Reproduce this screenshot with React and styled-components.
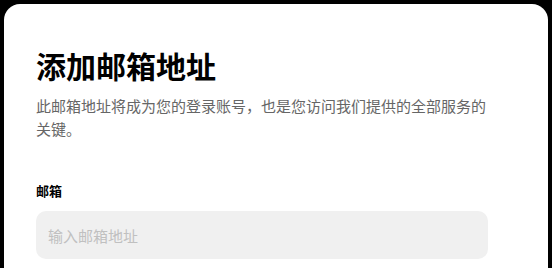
import styled, { createGlobalStyle } from "styled-components";

const GlobalStyle = createGlobalStyle`
  html, body {
    margin: 0;
    padding: 0;
    background: #000;
    height: 100%;
    overflow: hidden;
  }
  body {
    font-family: "Noto Sans CJK SC", "Noto Sans", sans-serif;
  }
`;

const Page = styled.div`
  padding: 4px 4px 0 4px;
  height: 264px;
  overflow: hidden;
`;

const Card = styled.div`
  background: #fff;
  border-radius: 16px;
  height: 300px;
  padding: 41px 60px 0 32px;
`;

const Title = styled.h1`
  margin: 0;
  font-size: 30px;
  line-height: 40px;
  font-weight: 700;
  color: #000;
`;

const Subtitle = styled.p`
  margin: 9px 0 0;
  font-size: 15px;
  line-height: 23px;
  color: #666;
`;

const Field = styled.div`
  margin-top: 42px;
  display: flex;
  flex-direction: column;
  gap: 11px;
`;

const Label = styled.label`
  font-size: 13px;
  line-height: 18px;
  font-weight: 700;
  color: #000;
`;

const Input = styled.input`
  box-sizing: border-box;
  width: 100%;
  height: 48px;
  border: none;
  outline: none;
  border-radius: 10px;
  background: #f0f0f0;
  padding: 0 12px;
  font-family: inherit;
  font-size: 15px;
  color: #000;

  &::placeholder {
    color: #c0c0c0;
  }
`;

export default function App() {
  return (
    <>
      <GlobalStyle />
      <Page>
        <Card>
          <Title>添加邮箱地址</Title>
          <Subtitle>
            此邮箱地址将成为您的登录账号，也是您访问我们提供的全部服务的关键。
          </Subtitle>
          <Field>
            <Label htmlFor="email">邮箱</Label>
            <Input id="email" type="email" placeholder="输入邮箱地址" />
          </Field>
        </Card>
      </Page>
    </>
  );
}
